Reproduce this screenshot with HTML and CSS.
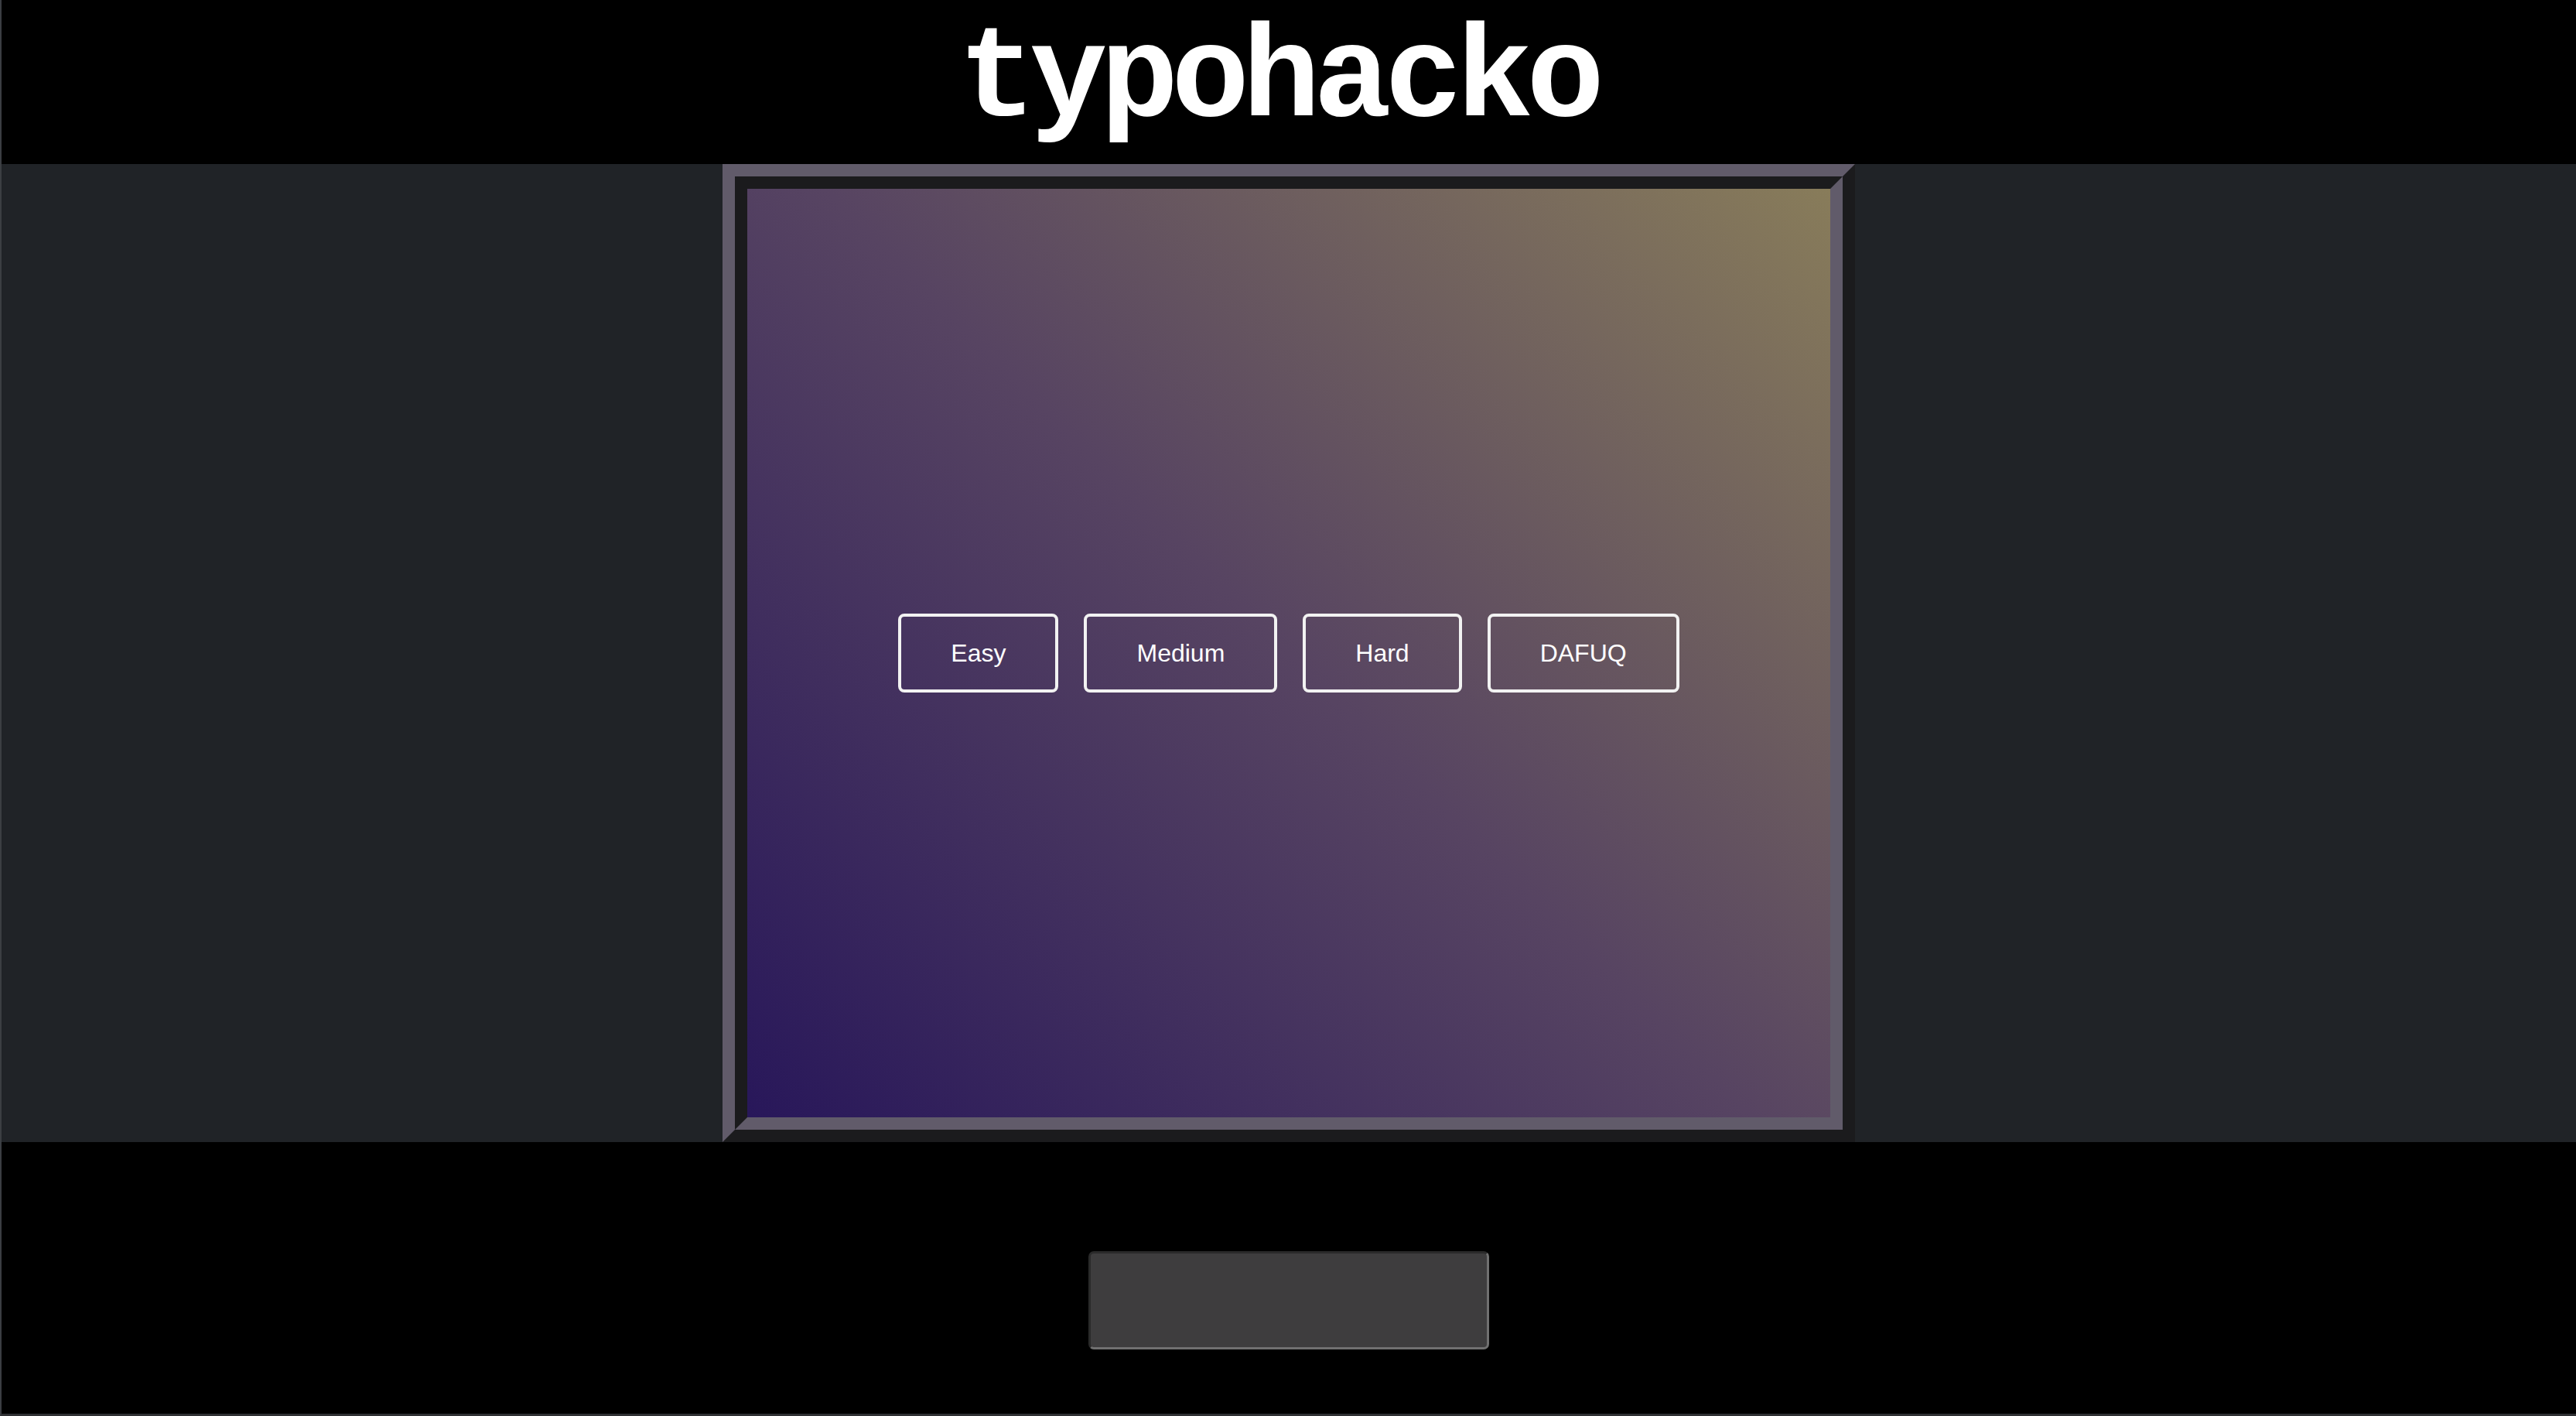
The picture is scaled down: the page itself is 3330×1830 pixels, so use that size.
FILE: index.html
```html
<!DOCTYPE html>
<html lang="en">
<head>
<meta charset="utf-8">
<title>typohacko</title>
<link rel="stylesheet" href="styles.css">
</head>
<body>
<div class="page">
  <header class="header">
    <h1 class="title">typohacko</h1>
  </header>
  <main class="stage">
    <div class="frame">
      <div class="frame-inner">
        <div class="screen">
          <div class="levels">
            <button class="level">Easy</button>
            <button class="level">Medium</button>
            <button class="level">Hard</button>
            <button class="level">DAFUQ</button>
          </div>
        </div>
      </div>
    </div>
  </main>
  <footer class="footer">
    <input class="typer" type="text" aria-label="type here">
  </footer>
</div>
</body>
</html>
```

FILE: styles.css
```css
* { box-sizing: border-box; }
html, body { margin: 0; padding: 0; background: #000; }
.page {
  width: 3330px;
  height: 1830px;
  border-left: 2px solid #3b3e42;
  border-bottom: 3px solid #2f3033;
  display: flex;
  flex-direction: column;
  overflow: hidden;
}
.header {
  height: 212px;
  display: flex;
  justify-content: center;
  align-items: flex-start;
  background: #000;
}
.title {
  margin: 0 28px 0 0;
  padding-top: 4px;
  font-family: "Liberation Mono", "Courier New", monospace;
  font-weight: bold;
  font-size: 168px;
  line-height: 200px;
  color: #fff;
  letter-spacing: -9px;
}
.stage {
  height: 1264px;
  background: #202327;
  display: flex;
  justify-content: center;
}
.frame {
  border: 16px solid;
  border-color: #615b6a #1b1b1d #1b1b1d #615b6a;
}
.frame-inner {
  border: 16px solid;
  border-color: #1b1b1d #615b6a #615b6a #1b1b1d;
}
.screen {
  width: 1400px;
  height: 1200px;
  background: linear-gradient(45deg, #28175a 0%, #574462 50%, #887c5a 100%);
  display: flex;
  align-items: center;
  justify-content: center;
}
.levels {
  display: flex;
  gap: 33px;
}
.level {
  height: 102px;
  padding: 0 64px;
  border: 4px solid #f2f2f2;
  border-radius: 8px;
  background: transparent;
  color: #fff;
  font-family: "Liberation Sans", Arial, sans-serif;
  font-size: 32px;
  line-height: 1;
}
.footer {
  flex: 1;
  display: flex;
  justify-content: center;
  align-items: flex-start;
  padding-top: 141px;
  background: #000;
}
.typer {
  width: 518px;
  height: 127px;
  background: #3e3d3e;
  border: 3px solid;
  border-color: #2a2a2a #707070 #707070 #2a2a2a;
  border-radius: 7px;
  color: #fff;
  font-size: 40px;
  font-family: "Liberation Sans", Arial, sans-serif;
  outline: none;
}
```
